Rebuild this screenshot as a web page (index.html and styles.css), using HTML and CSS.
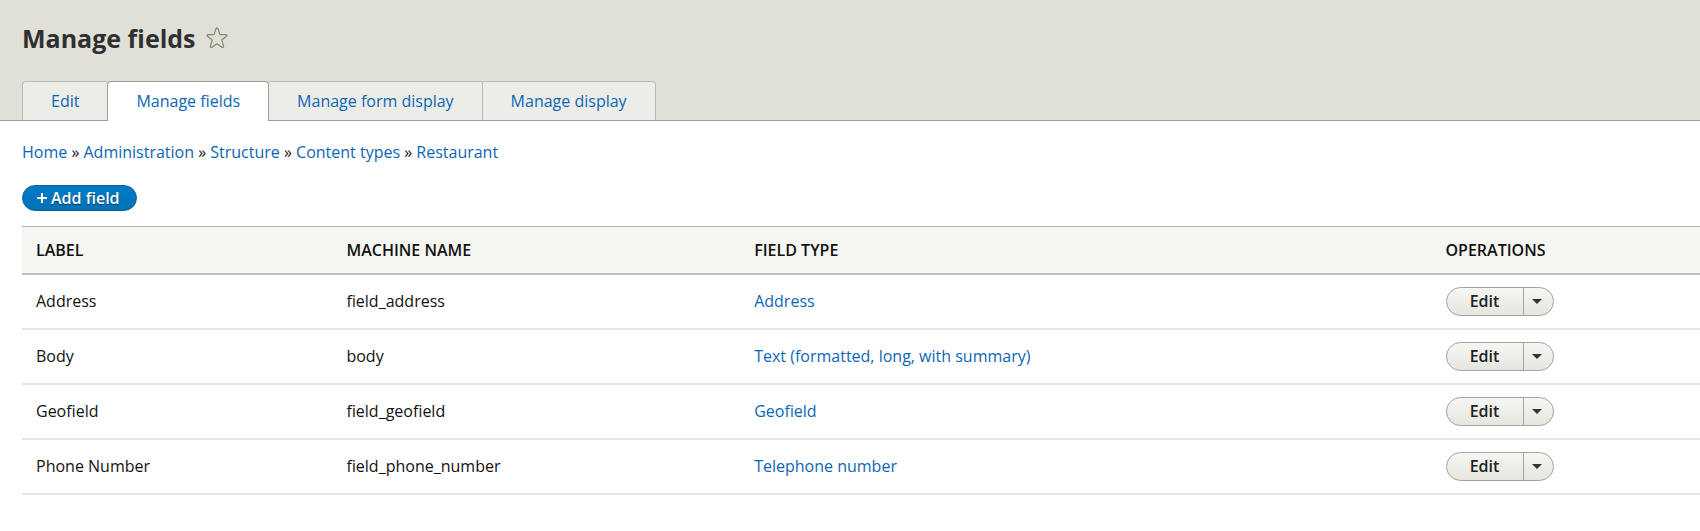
FILE: index.html
```html
<!DOCTYPE html>
<html lang="en">
<head>
<meta charset="utf-8">
<title>Manage fields</title>
<link rel="stylesheet" href="styles.css">
</head>
<body>
<header class="page-header">
  <div class="title-row">
    <h1 class="page-title">Manage fields</h1>
    <button class="shortcut" type="button" aria-label="Add to shortcuts">
      <svg width="22" height="22" viewBox="0 0 22 22" fill="none" stroke="#85866f" stroke-width="1.2" stroke-linejoin="round"><path d="M10.1 1.5Q11 .4 11.9 1.5L14 7.6 20.4 7.7Q21.4 8.1 20.8 9L15.8 13 17.6 19.4Q17.6 20.8 16.3 20.5L11 16.8 5.7 20.5Q4.4 20.8 4.4 19.4L6.2 13 1.2 9Q.6 8.1 1.6 7.7L8 7.6Z"/></svg>
    </button>
  </div>
  <nav class="tabs" aria-label="Primary tabs">
    <a class="tab" href="#edit">Edit</a>
    <a class="tab tab-active" href="#fields" aria-current="page">Manage fields</a>
    <a class="tab" href="#form">Manage form display</a>
    <a class="tab" href="#display">Manage display</a>
  </nav>
</header>
<main class="content">
  <nav class="breadcrumb" aria-label="Breadcrumb">
    <a href="#home">Home</a> » <a href="#admin">Administration</a> » <a href="#structure">Structure</a> » <a href="#types">Content types</a> » <a href="#restaurant">Restaurant</a>
  </nav>
  <button class="add-button" type="button"><svg width="10" height="10" viewBox="0 0 10 10" stroke="#fff" stroke-width="2"><path d="M5 0V10M0 5H10"/></svg>Add field</button>
  <table class="fields">
    <colgroup><col class="col-label"><col class="col-name"><col class="col-type"><col></colgroup>
    <thead>
      <tr><th scope="col">LABEL</th><th scope="col">MACHINE NAME</th><th scope="col">FIELD TYPE</th><th scope="col">OPERATIONS</th></tr>
    </thead>
    <tbody>
      <tr><td>Address</td><td>field_address</td><td><a href="#address">Address</a></td><td><div class="dropbutton"><button class="drop-main" type="button">Edit</button><button class="drop-toggle" type="button" aria-label="More actions"></button></div></td></tr>
      <tr><td>Body</td><td>body</td><td><a href="#text">Text (formatted, long, with summary)</a></td><td><div class="dropbutton"><button class="drop-main" type="button">Edit</button><button class="drop-toggle" type="button" aria-label="More actions"></button></div></td></tr>
      <tr><td>Geofield</td><td>field_geofield</td><td><a href="#geofield">Geofield</a></td><td><div class="dropbutton"><button class="drop-main" type="button">Edit</button><button class="drop-toggle" type="button" aria-label="More actions"></button></div></td></tr>
      <tr><td>Phone Number</td><td>field_phone_number</td><td><a href="#telephone">Telephone number</a></td><td><div class="dropbutton"><button class="drop-main" type="button">Edit</button><button class="drop-toggle" type="button" aria-label="More actions"></button></div></td></tr>
    </tbody>
  </table>
</main>
</body>
</html>
```
FILE: styles.css
```css
* { box-sizing: border-box; }
body {
  margin: 0;
  background: #fff;
  color: #111;
  font: 16px/24px "Open Sans", "Noto Sans", sans-serif;
}
a { color: #0c66b8; text-decoration: none; }
button { font: inherit; cursor: pointer; }

.page-header {
  padding: 20px 22px 0;
  background: #e0e0d8;
  border-bottom: 1px solid #a0a19c;
}
.title-row { display: flex; align-items: center; gap: 10px; }
.page-title { margin: 0; color: #303030; font-size: 25px; line-height: 36px; font-weight: 700; }
.shortcut { display: flex; padding: 0; border: 0; background: none; }

.tabs { display: flex; margin-top: 25px; }
.tab {
  padding: 7px 28px;
  background: #ededE8;
  border: 1px solid #b9bab5;
  border-width: 1px 1px 0 0;
}
.tab:first-child { border-left-width: 1px; border-right: 0; border-top-left-radius: 4px; }
.tab:last-child { border-top-right-radius: 4px; }
.tab-active {
  margin-bottom: -1px;
  background: #fff;
  border: 1px solid #9c9d98;
  border-bottom: 0;
  border-radius: 4px 4px 0 0;
}

.content { padding: 19px 0 36px 22px; }
.add-button {
  display: flex;
  align-items: center;
  gap: 4px;
  height: 26px;
  margin: 21px 0 15px;
  padding: 0 16px 0 14px;
  border: 1px solid #1e5c90;
  border-radius: 13px;
  background: linear-gradient(#007bc6, #0071b8);
  color: #fff;
  font-size: 16px;
  font-weight: 600;
  line-height: 24px;
  text-shadow: 0 1px 1px rgba(0, 0, 0, .5);
}

.fields { width: 100%; border-collapse: collapse; table-layout: fixed; }
.col-label { width: 18.5%; }
.col-name { width: 24.3%; }
.col-type { width: 41.2%; }
th, td { padding: 0 14px; text-align: left; vertical-align: middle; }
th {
  height: 47px;
  background: #f5f5f1;
  border-top: 1px solid #b3b4ae;
  border-bottom: 2px solid #bfc0ba;
  font-weight: 600;
}
td { height: 55px; border-bottom: 2px solid #e6e6e0; }

.dropbutton {
  display: flex;
  width: max-content;
  height: 29px;
  overflow: hidden;
  border: 1px solid #a3a3a0;
  border-radius: 15px;
  background: linear-gradient(#f6f6f3, #e6e6df);
}
.drop-main, .drop-toggle { border: 0; background: none; color: #222; }
.drop-main { width: 76px; padding: 0; font-weight: 600; }
.drop-toggle {
  display: flex;
  align-items: center;
  justify-content: center;
  width: 30px;
  padding: 0 3px 0 0;
  border-left: 1px solid #a3a3a0;
}
.drop-toggle::before {
  content: "";
  border: 5px solid transparent;
  border-top-color: #333;
  border-bottom: 0;
}
```
